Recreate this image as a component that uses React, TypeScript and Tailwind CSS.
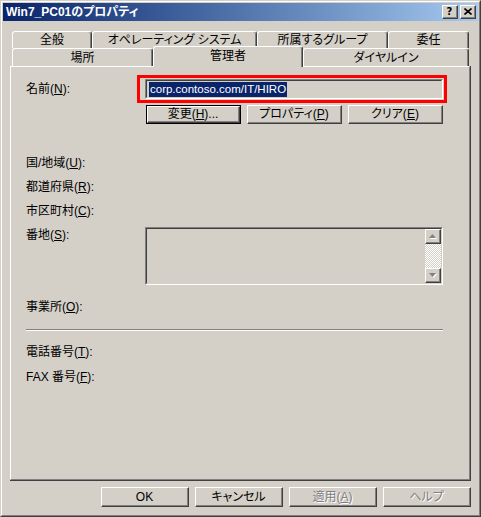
import type { ReactNode } from 'react'

type BtnProps = {
  children: ReactNode
  className?: string
  disabled?: boolean
  isDefault?: boolean
}

// Classic 3D push button
function Button({ children, className = '', disabled, isDefault }: BtnProps) {
  const bevel = (
    <div className="h-full border border-t-white border-l-white border-r-[#404040] border-b-[#404040]">
      <div className="flex h-full items-center justify-center border-r border-b border-[#808080] leading-none">
        <span className={disabled ? 'text-[#808080] [text-shadow:1px_1px_0_#ffffff]' : ''}>{children}</span>
      </div>
    </div>
  )
  if (isDefault) {
    return <div className={`${className} border border-black`}>{bevel}</div>
  }
  return <div className={className}>{bevel}</div>
}

function Sunken({ children, className = '' }: { children?: ReactNode; className?: string }) {
  return (
    <div className={`${className} border border-t-[#808080] border-l-[#808080] border-r-white border-b-white`}>
      <div className="h-full border border-t-[#404040] border-l-[#404040] border-r-[#d4d0c8] border-b-[#d4d0c8]">
        {children}
      </div>
    </div>
  )
}

function Tab({ label, className = '', selected }: { label: string; className?: string; selected?: boolean }) {
  return (
    <div
      className={`${className} flex items-center justify-center rounded-t-[3px] border-t border-l border-r border-t-white border-l-white border-r-[#404040] bg-[#d4d0c8] shadow-[inset_-1px_0_0_#808080] ${
        selected ? 'relative z-10 -mt-[2px] h-[21px] pb-[2px]' : 'h-full'
      }`}
    >
      {label}
    </div>
  )
}

function Label({ text, mn }: { text: string; mn: string }) {
  return (
    <span className="whitespace-nowrap">
      {text}(<u>{mn}</u>):
    </span>
  )
}

function Arrow({ down }: { down?: boolean }) {
  return (
    <div className="h-[15px] w-[16px] border border-t-white border-l-white border-r-[#404040] border-b-[#404040]">
      <div className="flex h-full items-center justify-center border-r border-b border-[#808080]">
        <svg width="8" height="5" viewBox="0 0 8 5">
          {down ? (
            <>
              <path d="M1 1h7l-3.5 4z" fill="#ffffff" />
              <path d="M0 0h7l-3.5 4z" fill="#808080" />
            </>
          ) : (
            <>
              <path d="M1 5h7l-3.5-4z" fill="#ffffff" />
              <path d="M0 4h7l-3.5-4z" fill="#808080" />
            </>
          )}
        </svg>
      </div>
    </div>
  )
}

export default function App() {
  return (
    <div className="h-[517px] w-[481px] border border-t-[#d4d0c8] border-l-[#d4d0c8] border-r-[#404040] border-b-[#404040] bg-[#d4d0c8] font-['Liberation_Sans','Noto_Sans_CJK_JP',sans-serif] text-[12px] text-black [font-feature-settings:'palt']">
      <div className="h-full border border-t-white border-l-white border-r-[#808080] border-b-[#808080] p-px">
        {/* caption */}
        <div className="flex h-[18px] items-center justify-between bg-linear-to-r from-[#0a246a] to-[#a6caf0] pl-[3px] pr-[2px]">
          <span className="text-[12px] font-bold text-white">Win7_PC01のプロパティ</span>
          <div className="flex gap-[2px]">
            <div className="h-[14px] w-[16px] border border-t-white border-l-white border-r-[#404040] border-b-[#404040] bg-[#d4d0c8]">
              <div className="flex h-full items-center justify-center border-r border-b border-[#808080] font-['DejaVu_Sans',sans-serif] text-[10px] font-bold leading-none">
                ?
              </div>
            </div>
            <div className="h-[14px] w-[16px] border border-t-white border-l-white border-r-[#404040] border-b-[#404040] bg-[#d4d0c8]">
              <div className="flex h-full items-center justify-center border-r border-b border-[#808080]">
                <svg width="8" height="7" viewBox="0 0 8 7">
                  <path d="M0.5 0.5l7 6M7.5 0.5l-7 6" stroke="#000" strokeWidth="1.6" />
                </svg>
              </div>
            </div>
          </div>
        </div>

        <div className="pl-[7px] pt-[10px]">
          {/* tab strip */}
          <div className="ml-[2px] w-[457px]">
            <div className="flex h-[17px]">
              <Tab label="全般" className="w-[80px]" />
              <Tab label="オペレーティング システム" className="w-[165px]" />
              <Tab label="所属するグループ" className="w-[131px]" />
              <Tab label="委任" className="w-[81px]" />
            </div>
            <div className="flex h-[18px]">
              <Tab label="場所" className="w-[141px]" />
              <Tab label="管理者" className="w-[150px]" selected />
              <Tab label="ダイヤルイン" className="w-[166px]" />
            </div>
          </div>

          {/* page */}
          <div className="h-[415px] w-[461px] border-r border-b border-[#404040]">
            <div className="h-full border-t border-l border-r border-b border-t-white border-l-white border-r-[#808080] border-b-[#808080] pl-[15px] pt-[12px]">
              <div className="flex h-[20px] items-center">
                <div className="w-[119px]">
                  <Label text="名前" mn="N" />
                </div>
                <div className="relative">
                  <Sunken className="h-[20px] w-[298px]">
                    <div className="flex h-full items-center pl-[2px]">
                      <span className="bg-[#0a246a] px-[1px] text-[11.5px] leading-[15px] text-white">
                        corp.contoso.com/IT/HIRO
                      </span>
                    </div>
                  </Sunken>
                  <div className="absolute -top-[4px] -bottom-[4px] -left-[8px] -right-[4px] border-[3px] border-[#ff0000]" />
                </div>
              </div>

              <div className="ml-[120px] mt-[6px] flex h-[19px] gap-[6px]">
                <Button className="w-[95px]" isDefault>
                  変更(<u>H</u>)...
                </Button>
                <Button className="w-[95px]">
                  プロパティ(<u>P</u>)
                </Button>
                <Button className="w-[95px]">
                  クリア(<u>E</u>)
                </Button>
              </div>

              <div className="mt-[27px] flex h-[24px] items-center">
                <Label text="国/地域" mn="U" />
              </div>
              <div className="flex h-[24px] items-center">
                <Label text="都道府県" mn="R" />
              </div>
              <div className="flex h-[24px] items-center">
                <Label text="市区町村" mn="C" />
              </div>

              <div className="mt-[4px] flex">
                <div className="w-[119px] pt-[1px] leading-[14px]">
                  <Label text="番地" mn="S" />
                </div>
                <Sunken className="h-[58px] w-[298px]">
                  <div className="flex h-full justify-end">
                    <div className="flex w-[16px] flex-col">
                      <Arrow />
                      <div className="flex-1 bg-[repeating-conic-gradient(#ffffff_0%_25%,#d4d0c8_0%_50%)] bg-[length:2px_2px]" />
                      <Arrow down />
                    </div>
                  </div>
                </Sunken>
              </div>

              <div className="mt-[10px] flex h-[24px] items-center">
                <Label text="事業所" mn="O" />
              </div>

              <div className="mt-[10px] h-[2px] w-[417px] border-t border-b border-t-[#808080] border-b-white" />

              <div className="mt-[9px] flex h-[24px] items-center">
                <Label text="電話番号" mn="T" />
              </div>
              <div className="mt-[1px] flex h-[24px] items-center">
                <span className="whitespace-nowrap">
                  FAX 番号(<u>F</u>):
                </span>
              </div>
            </div>
          </div>

          {/* dialog buttons */}
          <div className="mt-[6px] flex h-[20px] w-[461px] justify-end gap-[6px]">
            <Button className="w-[88px]">OK</Button>
            <Button className="w-[88px]">キャンセル</Button>
            <Button className="w-[88px]" disabled>
              適用(<u>A</u>)
            </Button>
            <Button className="w-[88px]" disabled>
              ヘルプ
            </Button>
          </div>
        </div>
      </div>
    </div>
  )
}
